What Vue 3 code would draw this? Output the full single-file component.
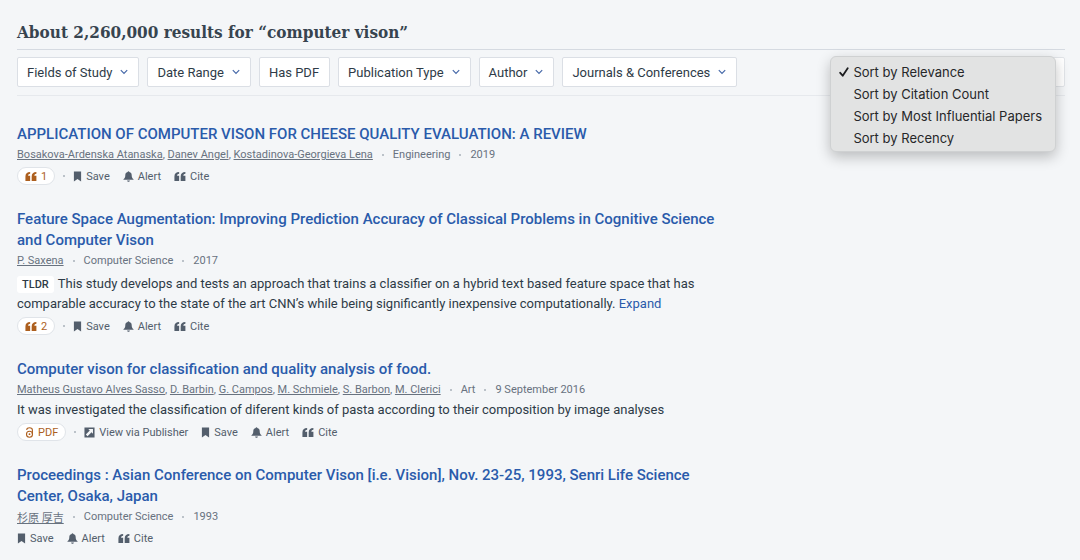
<script setup>
import { ref } from 'vue'

const filters = [
  { label: 'Fields of Study', menu: true },
  { label: 'Date Range', menu: true },
  { label: 'Has PDF', menu: false },
  { label: 'Publication Type', menu: true },
  { label: 'Author', menu: true },
  { label: 'Journals & Conferences', menu: true },
]

const sortOptions = [
  'Sort by Relevance',
  'Sort by Citation Count',
  'Sort by Most Influential Papers',
  'Sort by Recency',
]
const sort = ref(sortOptions[0])

const papers = [
  {
    title: 'APPLICATION OF COMPUTER VISON FOR CHEESE QUALITY EVALUATION: A REVIEW',
    authors: ['Bosakova-Ardenska Atanaska', 'Danev Angel', 'Kostadinova-Georgieva Lena'],
    field: 'Engineering',
    date: '2019',
    citations: 1,
  },
  {
    title: 'Feature Space Augmentation: Improving Prediction Accuracy of Classical Problems in Cognitive Science and Computer Vison',
    authors: ['P. Saxena'],
    field: 'Computer Science',
    date: '2017',
    tldr: 'This study develops and tests an approach that trains a classifier on a hybrid text based feature space that has comparable accuracy to the state of the art CNN’s while being significantly inexpensive computationally.',
    citations: 2,
  },
  {
    title: 'Computer vison for classification and quality analysis of food.',
    authors: ['Matheus Gustavo Alves Sasso', 'D. Barbin', 'G. Campos', 'M. Schmiele', 'S. Barbon', 'M. Clerici'],
    field: 'Art',
    date: '9 September 2016',
    abstract: 'It was investigated the classification of diferent kinds of pasta according to their composition by image analyses',
    pdf: true,
    publisher: true,
  },
  {
    title: 'Proceedings : Asian Conference on Computer Vison [i.e. Vision], Nov. 23-25, 1993, Senri Life Science Center, Osaka, Japan',
    authors: ['杉原 厚吉'],
    field: 'Computer Science',
    date: '1993',
  },
]
</script>

<template>
  <main class="page">
    <svg class="defs" aria-hidden="true">
      <symbol id="i-quote" viewBox="0 0 14 12">
        <path d="M6 .8v2C4.500 2.900 3.700 3.700 3.600 5.200H6V11.200H.5V6C.5 2.800 2.400.8 6 .8zM13.300.8v2c-1.500.1-2.300.9-2.400 2.400h2.400V11.200H7.800V6c0-3.200 1.900-5.200 5.500-5.200z" />
      </symbol>
      <symbol id="i-save" viewBox="0 0 10 12">
        <path d="M1 .5h8v11L5 8.700 1 11.500z" />
      </symbol>
      <symbol id="i-bell" viewBox="0 0 12 12">
        <path d="M6 .3c.6 0 .9.4.9.9C8.600 1.600 9.500 2.900 9.500 4.600c0 2 .5 3.200 2 4.300v.7H.5v-.7c1.500-1.100 2-2.300 2-4.300 0-1.700.9-3 2.600-3.400 0-.5.3-.9.9-.9zM4.500 10.300h3c-.1.900-.7 1.500-1.500 1.500s-1.400-.6-1.500-1.500z" />
      </symbol>
      <symbol id="i-out" viewBox="0 0 12 12">
        <path fill-rule="evenodd" d="M.5.5h11v11H.5zM4.700 2.200 6.300 3.800 2 8.100 3.900 10 8.200 5.700 9.800 7.300V2.200z" />
      </symbol>
      <symbol id="i-open" viewBox="0 0 9 11">
        <g fill="none" stroke="currentColor" stroke-width="1.100">
          <path d="M1.800 3V2.600C1.800 1.500 2.900.7 4.500.7s2.900.8 2.900 2.300v4" />
          <circle cx="4.500" cy="7.200" r="3" />
        </g>
        <circle cx="4.500" cy="7.200" r=".9" />
      </symbol>
    </svg>

    <h1>About 2,260,000 results for “computer vison”</h1>

    <div class="toolbar">
      <button v-for="f in filters" :key="f.label" type="button" class="filter">
        {{ f.label }}
        <svg v-if="f.menu" class="chev" viewBox="0 0 8 6" aria-hidden="true"><path d="M.8 1.200 4 4.400 7.200 1.200" /></svg>
      </button>
      <div class="sort">
        <select v-model="sort" aria-label="Sort results">
          <option v-for="o in sortOptions" :key="o">{{ o }}</option>
        </select>
        <svg class="updown" viewBox="0 0 8 10" aria-hidden="true"><path d="M1 3.500 4 .5 7 3.500zM1 6.500 4 9.500 7 6.500z" /></svg>
        <div class="menu" role="listbox" aria-label="Sort order">
          <button
            v-for="o in sortOptions"
            :key="o"
            type="button"
            role="option"
            :aria-selected="o === sort"
            @click="sort = o"
          >
            <span class="tick"><svg v-if="o === sort" viewBox="0 0 10 10" aria-hidden="true"><path d="M1.200 5.800 3.700 8.700 8.700 1.200" /></svg></span>
            {{ o }}
          </button>
        </div>
      </div>
    </div>

    <article v-for="p in papers" :key="p.title" class="paper">
      <h2><a href="#">{{ p.title }}</a></h2>
      <div class="meta">
        <span><template v-for="(a, i) in p.authors" :key="a"><template v-if="i">, </template><a href="#">{{ a }}</a></template></span>
        <i class="dot"></i>
        <span>{{ p.field }}</span>
        <i class="dot"></i>
        <span>{{ p.date }}</span>
      </div>
      <p v-if="p.tldr" class="text tldr"><b>TLDR</b>{{ p.tldr }} <a href="#">Expand</a></p>
      <p v-if="p.abstract" class="text">{{ p.abstract }}</p>
      <div class="actions">
        <a v-if="p.citations" href="#" class="pill"><svg class="quote"><use href="#i-quote" /></svg>{{ p.citations }}</a>
        <a v-if="p.pdf" href="#" class="pill"><svg class="narrow"><use href="#i-open" /></svg>PDF</a>
        <i v-if="p.citations || p.pdf" class="dot"></i>
        <a v-if="p.publisher" href="#" class="act"><svg class="wide"><use href="#i-out" /></svg>View via Publisher</a>
        <button type="button" class="act"><svg class="narrow"><use href="#i-save" /></svg>Save</button>
        <button type="button" class="act"><svg class="bell"><use href="#i-bell" /></svg>Alert</button>
        <button type="button" class="act"><svg class="quote"><use href="#i-quote" /></svg>Cite</button>
      </div>
    </article>
  </main>
</template>

<style>
body {
  margin: 0;
  background: #f4f6f8;
}
</style>

<style scoped>
.page {
  padding: 16px 15px 12px 17px;
  font-family: Roboto, "Noto Sans CJK JP", sans-serif;
  color: #2e3b47;
}
.defs {
  position: absolute;
  width: 0;
  height: 0;
}
button,
select {
  font: inherit;
  color: inherit;
  margin: 0;
}
h1 {
  margin: 0;
  height: 33px;
  line-height: 33px;
  font-family: "Roboto Slab", "DejaVu Serif Condensed", "DejaVu Serif", serif;
  font-size: 17px;
  font-weight: 700;
  color: #37444f;
  border-bottom: 1px solid #d5dae1;
}
.toolbar {
  display: flex;
  gap: 8px;
  padding: 7px 0 8px;
  border-bottom: 1px solid #e6e9ed;
  font-size: 13px;
}
.filter {
  display: flex;
  align-items: center;
  gap: 8px;
  height: 30px;
  padding: 0 10px 0 9px;
  background: #fff;
  border: 1px solid #dbdfe5;
  border-radius: 2px;
  white-space: nowrap;
}
.chev {
  width: 8px;
  height: 6px;
  fill: none;
  stroke: #4568a8;
  stroke-width: 1.2;
}
.sort {
  position: relative;
  margin-left: auto;
}
.sort select {
  width: 160px;
  height: 30px;
  padding: 0 10px;
  appearance: none;
  background: #fff;
  border: 1px solid #e2e5e9;
  border-radius: 2px;
}
.updown {
  position: absolute;
  top: 10px;
  right: 8px;
  width: 8px;
  height: 10px;
  fill: #535e6c;
}
.menu {
  position: absolute;
  top: -1px;
  right: 9px;
  z-index: 1;
  padding: 4px 13px 2px 8px;
  background: #e2e3e3;
  border: 1px solid #cfd1d2;
  border-radius: 6px;
  box-shadow: 0 5px 14px rgba(0, 0, 0, 0.24);
  font-family: Inter, sans-serif;
  color: #262729;
}
.menu button {
  display: flex;
  align-items: center;
  height: 22px;
  padding: 0;
  border: 0;
  background: none;
  white-space: nowrap;
}
.tick {
  width: 14px;
  height: 10px;
}
.tick svg {
  display: block;
  width: 10px;
  height: 10px;
  fill: none;
  stroke: #1c1d1f;
  stroke-width: 1.8;
  stroke-linecap: round;
  stroke-linejoin: round;
}
.paper {
  max-width: 704px;
  margin-top: 23px;
}
.toolbar + .paper {
  margin-top: 28px;
}
h2 {
  margin: 0;
  font-size: 15px;
  line-height: 21px;
  font-weight: 500;
}
a {
  color: #2a5bab;
  text-decoration: none;
}
.meta {
  display: flex;
  align-items: center;
  height: 19px;
  font-size: 11px;
  color: #68727f;
}
.meta a {
  color: inherit;
  text-decoration: underline;
  text-underline-offset: 1px;
}
.dot {
  width: 2px;
  height: 2px;
  margin: 0 8px;
  border-radius: 50%;
  background: #a9b0ba;
}
.meta .dot {
  margin: 0 9px;
}
.text {
  margin: 0;
  padding-top: 1px;
  font-size: 13px;
  line-height: 20px;
}
.tldr {
  padding-top: 4px;
}
.tldr b {
  display: inline-block;
  margin-right: 4px;
  padding: 0 5px;
  line-height: 17px;
  background: #fff;
  border-radius: 3px;
  font-size: 11px;
  font-weight: 500;
}
.actions {
  display: flex;
  align-items: center;
  height: 20px;
  margin-top: 2px;
  font-size: 11px;
  color: #535e6c;
}
.act,
.pill {
  display: flex;
  align-items: center;
  gap: 4px;
  color: inherit;
}
.act {
  padding: 0;
  border: 0;
  background: none;
  margin-right: 13px;
}
.pill {
  height: 16px;
  padding: 0 7px;
  background: #fff;
  border: 1px solid #e0e4e9;
  border-radius: 9px;
  color: #ad5f1e;
}
.actions svg {
  height: 11px;
  fill: currentColor;
}
.quote {
  width: 12px;
}
.narrow {
  width: 9px;
}
.bell,
.wide {
  width: 11px;
}
</style>
